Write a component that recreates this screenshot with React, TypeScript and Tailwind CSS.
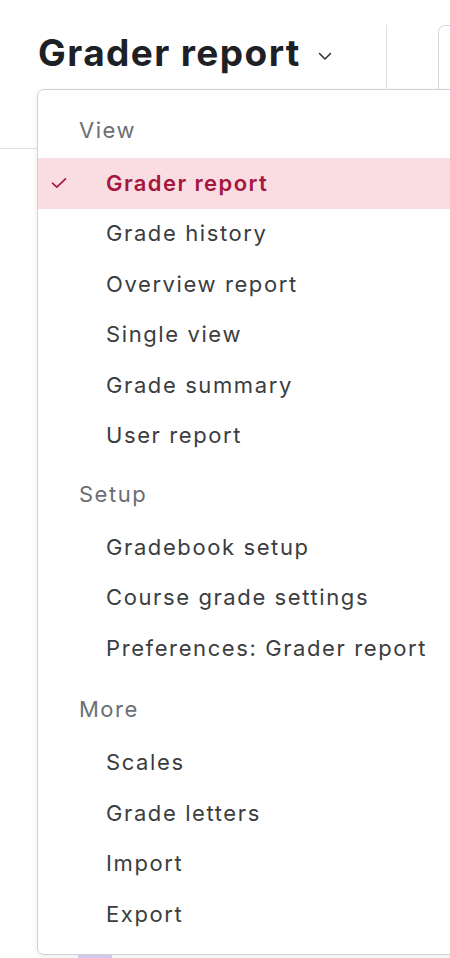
import React from "react";

const Check = () => (
  <svg width="16" height="12" viewBox="0 0 16 12" fill="none">
    <path d="M1.5 6.2 L5.8 10.2 L14.5 1.8" stroke="#a5173d" strokeWidth="1.6" strokeLinecap="round" strokeLinejoin="round" />
  </svg>
);

const Header = ({ label, spacing }: { label: string; spacing: string }) => (
  <div className={`${spacing} mb-[3px] flex h-[50px] items-center pl-[41px] text-[22px] tracking-[1.5px] text-[#6a6f74]`}>
    {label}
  </div>
);

const Item = ({ label, active }: { label: string; active?: boolean }) =>
  active ? (
    <div className="relative flex h-[50.5px] items-center bg-[#f9dde2] pl-[68px] text-[22px] font-semibold tracking-[1.4px] text-[#a5173d]">
      <span className="absolute left-[13px] top-[19px]">
        <Check />
      </span>
      {label}
    </div>
  ) : (
    <div className="flex h-[50.5px] items-center pl-[68px] text-[22px] tracking-[1.6px] text-[#3b3d40]">{label}</div>
  );

export default function App() {
  return (
    <div
      className="relative h-[958px] w-[450px] overflow-hidden bg-white"
      style={{ fontFamily: "Inter, 'Noto Sans', sans-serif" }}
    >
      {/* page header */}
      <div className="flex h-[90px] items-start pt-[25px]">
        <div className="flex h-[65px] w-[386px] items-center pb-[9px] pl-[38px]">
          <span className="text-[37px] font-bold tracking-[1.4px] text-[#1d2125]">Grader report</span>
          <svg className="ml-[17px] mt-[6px]" width="14" height="9" viewBox="0 0 14 9" fill="none">
            <path d="M1.5 1.5 L7 7 L12.5 1.5" stroke="#2a2d33" strokeWidth="1.5" strokeLinecap="round" strokeLinejoin="round" />
          </svg>
        </div>
        <div className="h-[65px] border-l border-[#dcdfe3]" />
        <div className="ml-[51px] h-[65px] flex-1 rounded-tl-[7px] border-l border-t border-[#d4d7db]" />
      </div>
      <div className="mt-[58px] border-t border-[#dcdfe3]" />

      <div className="absolute left-[78px] top-[952px] h-[10px] w-[34px] rounded-full bg-[#dcd0f7]" />

      {/* dropdown menu */}
      <div className="absolute left-[37px] top-[89px] w-[430px] rounded-[7px] border border-[#cfd2d6] bg-white pb-[14px] pt-[15px] shadow-[0_2px_6px_rgba(0,0,0,0.08)]">
        <Header label="View" spacing="mt-0" />
        <Item label="Grader report" active />
        <Item label="Grade history" />
        <Item label="Overview report" />
        <Item label="Single view" />
        <Item label="Grade summary" />
        <Item label="User report" />
        <Header label="Setup" spacing="mt-[8px]" />
        <Item label="Gradebook setup" />
        <Item label="Course grade settings" />
        <Item label="Preferences: Grader report" />
        <Header label="More" spacing="mt-[11px]" />
        <Item label="Scales" />
        <Item label="Grade letters" />
        <Item label="Import" />
        <Item label="Export" />
      </div>
    </div>
  );
}
